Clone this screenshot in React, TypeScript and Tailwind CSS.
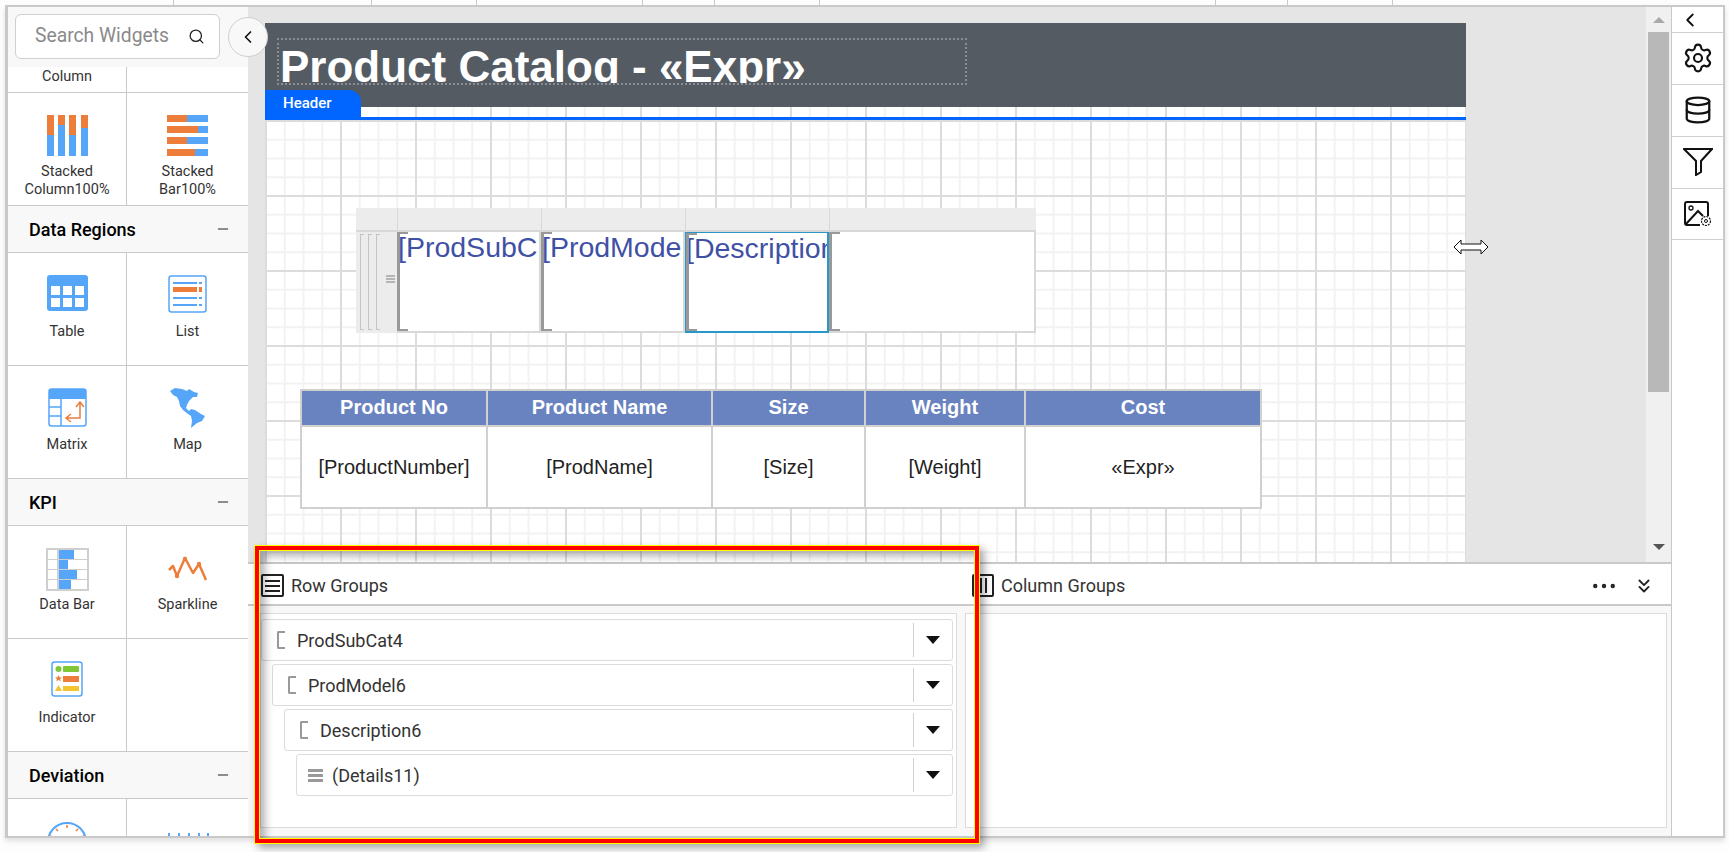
import { ChevronLeft, ChevronsDown, Database, Minus, MoreHorizontal, Search, Settings } from "lucide-react";

const blue = "#55a5f8";
const orange = "#ed7d3b";

function StackedColumnIcon() {
  const cols = [[0, 20], [11, 10], [22, 20], [34, 13]];
  return (
    <svg width="41" height="41" viewBox="0 0 41 41">
      {cols.map(([x, h]) => (
        <g key={x}>
          <rect x={x} y={0} width={7} height={h} fill={orange} />
          <rect x={x} y={h} width={7} height={41 - h} fill={blue} />
        </g>
      ))}
    </svg>
  );
}

function StackedBarIcon() {
  const bars = [[0, 20], [11, 31], [22, 20], [34, 28]];
  return (
    <svg width="41" height="41" viewBox="0 0 41 41">
      {bars.map(([y, w]) => (
        <g key={y}>
          <rect x={0} y={y} width={w} height={7} fill={orange} />
          <rect x={w} y={y} width={41 - w} height={7} fill={blue} />
        </g>
      ))}
    </svg>
  );
}

function TableIcon() {
  return (
    <svg width="41" height="36" viewBox="0 0 41 36">
      <rect width="41" height="36" rx="3" fill={blue} />
      {[4, 16, 28].map((x) => (
        <g key={x} fill="#fff">
          <rect x={x} y={11} width={9} height={9} />
          <rect x={x} y={23} width={9} height={9} />
        </g>
      ))}
    </svg>
  );
}

function ListIcon() {
  return (
    <svg width="39" height="38" viewBox="0 0 39 38">
      <rect x="1" y="1" width="37" height="36" rx="2.5" fill="#fff" stroke={blue} strokeWidth="1.5" />
      {[7, 29].map((y) => (
        <g key={y} fill={blue}>
          <rect x={5} y={y} width={24} height={2} />
          <rect x={31} y={y} width={3} height={2} />
        </g>
      ))}
      <rect x="5" y="22" width="24" height="2" fill={blue} />
      <rect x="31" y="22" width="3" height="2" fill={blue} />
      <rect x="5" y="12" width="24" height="5" fill={orange} />
      <rect x="31" y="12" width="3" height="5" fill={orange} />
    </svg>
  );
}

function MatrixIcon() {
  return (
    <svg width="39" height="39" viewBox="0 0 39 39" fill="none">
      <rect x="1" y="1" width="37" height="37" rx="2.5" fill="#fff" stroke={blue} strokeWidth="1.5" />
      <path d="M1 3.5a2.5 2.5 0 0 1 2.5-2.5h32a2.5 2.5 0 0 1 2.5 2.5V11H1z" fill={blue} />
      <path d="M1 19h12M1 28h12M13 11v27" stroke={blue} strokeWidth="1.5" />
      <path d="M32 15v15H19M28 19l4-5 4 5M23 26l-5 4 5 4" stroke={orange} strokeWidth="1.5" />
    </svg>
  );
}

function MapIcon() {
  return (
    <svg width="35" height="40" viewBox="0 0 35 40">
      <path
        fill={blue}
        d="M0 3 L5 0 L12 1 L17 3 L19 1 L24 4 L28 5 L27 9 L23 9 L19 13 L17 17 L16 20 L19 23 L21 21 L25 22 L31 26 L35 28 L32 33 L27 35 L21 40 L22 33 L21 28 L18 26 L13 22 L10 18 L9 13 L7 9 L3 7 Z"
      />
    </svg>
  );
}

function DataBarIcon() {
  const bars = [15, 9, 18, 12];
  return (
    <div className="grid h-[43px] w-[43px] grid-rows-4 gap-[1px] border-2 border-[#cfcfcf] bg-[#cfcfcf]">
      {bars.map((w, i) => (
        <div key={i} className="grid grid-cols-[9px_1fr] gap-[2px]">
          <div className="bg-white" />
          <div className="bg-white">
            {/* bar width comes from the data */}
            <div className="h-full bg-[#55a5f8]" style={{ width: w }} />
          </div>
        </div>
      ))}
    </div>
  );
}

function SparklineIcon() {
  return (
    <svg className="mt-[8px]" width="40" height="26" viewBox="0 0 40 26" fill="none">
      <polyline points="1,14 5,10 9,20 17,2 25,17 31,8 38,24" stroke={orange} strokeWidth="2.5" strokeLinejoin="round" />
      <circle cx="9" cy="20" r="2.2" fill={orange} />
      <circle cx="17" cy="3" r="2.2" fill={orange} />
      <circle cx="31" cy="8" r="2.2" fill={orange} />
    </svg>
  );
}

function IndicatorIcon() {
  return (
    <svg width="32" height="36" viewBox="0 0 32 36">
      <rect x="1" y="1" width="30" height="34" rx="2.5" fill="#fff" stroke={blue} strokeWidth="1.5" />
      <circle cx="7.5" cy="8" r="3" fill="#7fc737" />
      <rect x="12" y="5" width="16" height="6" rx="1" fill="#7fc737" />
      <path d="M7.5 14l1 2.2 2.4.2-1.8 1.6.6 2.3-2.2-1.2-2.2 1.2.6-2.3-1.8-1.6 2.4-.2z" fill={orange} />
      <rect x="12" y="15" width="16" height="6" fill={orange} />
      <path d="M7.5 24l3.5 6H4z" fill="#f4c430" />
      <rect x="12" y="25" width="16" height="5" fill="#f4c430" />
    </svg>
  );
}

function GaugeIcon() {
  return (
    <svg width="42" height="17" viewBox="0 0 42 17" fill="none">
      <circle cx="21" cy="21" r="19" stroke={blue} strokeWidth="2" />
      <path d="M21 4v3M10 8l2 2M32 8l-2 2M4 15l3 1M38 15l-3 1" stroke={orange} strokeWidth="1.5" />
    </svg>
  );
}

function BulletIcon() {
  return (
    <svg width="42" height="17" viewBox="0 0 42 17">
      {[1, 11, 21, 31, 40].map((x) => (
        <rect key={x} x={x} y={12} width={2} height={3} fill={blue} />
      ))}
    </svg>
  );
}

function WidgetCell({ label, icon, right }: { label?: string[]; icon?: React.ReactNode; right?: boolean }) {
  return (
    <div className={`flex h-[112px] flex-col items-center ${right ? "" : "border-r border-[#c9c9c9]"}`}>
      <div className="flex h-[70px] items-start pt-[22px]">{icon}</div>
      {label?.map((l) => (
        <div key={l} className="text-[14.5px] leading-[18px] text-[#333]">
          {l}
        </div>
      ))}
    </div>
  );
}

function WidgetRow({ children }: { children: React.ReactNode }) {
  return <div className="grid shrink-0 grid-cols-[119px_121px] border-b border-[#c9c9c9]">{children}</div>;
}

function SectionHead({ title }: { title: string }) {
  return (
    <div className="flex h-[47px] shrink-0 items-center justify-between border-b border-[#c9c9c9] bg-[#f8f8f8] pl-[21px] pr-[17px]">
      <span className="text-[18px] font-medium text-black">{title}</span>
      <Minus size={16} strokeWidth={1.6} className="text-[#222]" />
    </div>
  );
}

function Sidebar() {
  return (
    <aside className="relative z-10 flex w-[240px] shrink-0 flex-col overflow-hidden bg-white">
      <div className="h-[60px] shrink-0 bg-[#f8f8f8] pl-[7px] pt-[7px]">
        <div className="flex h-[45px] w-[205px] items-center justify-between rounded-[6px] border border-[#cfcfcf] bg-white pl-[19px] pr-[14px]">
          <span className="text-[19.3px] text-[#8a8a8a]">Search Widgets</span>
          <Search size={17} strokeWidth={1.8} className="text-[#222]" />
        </div>
      </div>
      <div className="grid h-[26px] shrink-0 grid-cols-[119px_121px] border-b border-[#c9c9c9]">
        <div className="border-r border-[#c9c9c9] text-center text-[14.5px] leading-[20px] text-[#333]">Column</div>
        <div />
      </div>
      <WidgetRow>
        <WidgetCell icon={<StackedColumnIcon />} label={["Stacked", "Column100%"]} />
        <WidgetCell right icon={<StackedBarIcon />} label={["Stacked", "Bar100%"]} />
      </WidgetRow>
      <SectionHead title="Data Regions" />
      <WidgetRow>
        <WidgetCell icon={<TableIcon />} label={["Table"]} />
        <WidgetCell right icon={<ListIcon />} label={["List"]} />
      </WidgetRow>
      <WidgetRow>
        <WidgetCell icon={<MatrixIcon />} label={["Matrix"]} />
        <WidgetCell right icon={<MapIcon />} label={["Map"]} />
      </WidgetRow>
      <SectionHead title="KPI" />
      <WidgetRow>
        <WidgetCell icon={<DataBarIcon />} label={["Data Bar"]} />
        <WidgetCell right icon={<SparklineIcon />} label={["Sparkline"]} />
      </WidgetRow>
      <WidgetRow>
        <WidgetCell icon={<IndicatorIcon />} label={["Indicator"]} />
        <WidgetCell right />
      </WidgetRow>
      <SectionHead title="Deviation" />
      <div className="grid shrink-0 grid-cols-[119px_121px]">
        <WidgetCell icon={<GaugeIcon />} />
        <WidgetCell right icon={<BulletIcon />} />
      </div>
    </aside>
  );
}

function Bracket({ color = "border-[#999]" }: { color?: string }) {
  return <div className={`absolute inset-y-0 left-0 w-[11px] border-y-2 border-l-[3px] ${color}`} />;
}

function DesignTable() {
  const cols = ["[ProdSubC", "[ProdMode", "[Description", ""];
  return (
    <div className="absolute left-[91px] top-[101px] grid w-[680px] grid-cols-[41px_144px_144px_144px_207px] grid-rows-[24px_101px]">
      <div className="border-b-2 border-[#d8d8d8] bg-[#ececec]" />
      {cols.map((_, i) => (
        <div key={i} className="border-b-2 border-l border-[#d8d8d8] bg-[#ececec]" />
      ))}
      <div className="flex gap-[4px] bg-[#ececec] pl-[4px] pt-[2px]">
        {[0, 1, 2].map((i) => (
          <div key={i} className="h-[96px] w-[4px] border-y border-l border-[#c4c4c4]" />
        ))}
        <div className="ml-[2px] mt-[41px] flex h-[10px] w-[9px] flex-col gap-[1px]">
          <div className="h-[2px] bg-[#b5b5b5]" />
          <div className="h-[2px] bg-[#b5b5b5]" />
          <div className="h-[2px] bg-[#b5b5b5]" />
        </div>
      </div>
      {cols.map((c, i) => (
        <div
          key={i}
          className={`relative overflow-hidden whitespace-nowrap border-b-2 border-r-2 bg-white font-['Liberation_Sans',sans-serif] text-[28.5px] leading-[30px] text-[#3f51a5] ${
            i === 2 ? "border-l border-t border-[#2a97c9]" : "pl-[1px] border-[#d8d8d8]"
          }`}
        >
          <Bracket />
          {c}
        </div>
      ))}
    </div>
  );
}

function DataTable() {
  const rows = [
    ["Product No", "[ProductNumber]"],
    ["Product Name", "[ProdName]"],
    ["Size", "[Size]"],
    ["Weight", "[Weight]"],
    ["Cost", "«Expr»"],
  ];
  return (
    <div className="absolute left-[35px] top-[282px] grid w-[962px] grid-cols-[186px_225px_153px_160px_236px] grid-rows-[36px_82px] border-r-2 border-t-2 border-[#d0d0d0] font-['Liberation_Sans',sans-serif] text-[20px]">
      {rows.map(([h]) => (
        <div key={h} className="flex justify-center border-b-2 border-l-2 border-[#d0d0d0] bg-[#6883c0] pt-[1px] font-bold leading-[30px] text-white">
          {h}
        </div>
      ))}
      {rows.map(([h, v]) => (
        <div key={h} className="flex items-center justify-center border-b-2 border-l-2 border-[#d0d0d0] bg-white text-[#222]">
          {v}
        </div>
      ))}
    </div>
  );
}

function Canvas() {
  return (
    <div className="relative flex min-w-0 flex-1 bg-[#e5e5e5] pl-[17px] pt-[16px]">
      <div className="flex w-[1201px] flex-col">
        <div className="h-[84px] shrink-0 bg-[#555b63] pl-[12px] pt-[15px]">
          <div className="h-[47px] w-[690px] overflow-hidden border-2 border-dotted border-[#8a8e94] pl-[1px] font-['Liberation_Sans',sans-serif] text-[44px] font-bold leading-[54px] text-white">
            Product Catalog - «Expr»
          </div>
        </div>
        <div className="relative flex-1 bg-white bg-[linear-gradient(to_right,#dcdcdc_2px,transparent_2px),linear-gradient(to_bottom,#dcdcdc_2px,transparent_2px),linear-gradient(to_right,#f2f2f2_2px,transparent_2px),linear-gradient(to_bottom,#f2f2f2_2px,transparent_2px)] bg-[size:75px_75px,75px_75px,18.75px_18.75px,18.75px_18.75px] bg-[position:0_13px]">
          <div className="absolute inset-x-0 top-[10px] h-[3px] bg-[#0066ff]" />
          <div className="absolute left-0 top-[-17px] flex h-[30px] w-[96px] rounded-tr-[12px] bg-[#0066ff] pl-[18px] pt-[2px] text-[15px] font-medium leading-[22px] text-white">
            Header
          </div>
          <DesignTable />
          <DataTable />
        </div>
      </div>
      {/* resize cursor sitting on the page edge */}
      <svg className="absolute left-[1205px] top-[232px]" width="36" height="16" viewBox="0 0 36 16">
        <path d="M1 8l7-7v4h20V1l7 7-7 7v-4H8v4z" fill="#fff" stroke="#111" strokeWidth="1" />
      </svg>
    </div>
  );
}

function Scrollbar() {
  return (
    <div className="flex w-[25px] shrink-0 flex-col items-center bg-[#f0f0f0]">
      <div className="flex h-[25px] items-center">
        <div className="h-0 w-0 border-x-[6px] border-b-[6px] border-x-transparent border-b-[#a9a9a9]" />
      </div>
      <div className="h-[360px] w-[21px] bg-[#b8b8b8]" />
      <div className="flex flex-1 items-end pb-[12px]">
        <div className="h-0 w-0 border-x-[6px] border-t-[6px] border-x-transparent border-t-[#555]" />
      </div>
    </div>
  );
}

function Caret() {
  return (
    <svg width="14" height="8" viewBox="0 0 14 8">
      <path d="M0 0h14L7 8z" fill="#111" />
    </svg>
  );
}

function GroupRow({ label, indent, details }: { label: string; indent: string; details?: boolean }) {
  return (
    <div className={`flex h-[42px] items-center rounded-[3px] border border-[#dcdcdc] bg-white ${indent}`}>
      {details ? (
        <div className="ml-[11px] flex w-[15px] flex-col gap-[2px]">
          <div className="h-[3px] bg-[#999]" />
          <div className="h-[3px] bg-[#999]" />
          <div className="h-[3px] bg-[#999]" />
        </div>
      ) : (
        <div className="ml-[15px] h-[18px] w-[8px] rounded-l-[2px] border-y-2 border-l-2 border-[#999]" />
      )}
      <span className={`text-[18px] text-[#333] ${details ? "ml-[9px]" : "ml-[12px]"}`}>{label}</span>
      <div className="ml-auto flex h-[34px] w-[39px] items-center justify-center border-l border-[#d0d0d0]">
        <Caret />
      </div>
    </div>
  );
}

function GroupingPanel() {
  return (
    <div className="flex h-[274px] flex-col border-t-2 border-[#c9c9c9] bg-white">
      <div className="grid h-[42px] shrink-0 grid-cols-[724px_1fr] border-b-2 border-[#c9c9c9] pt-[3px]">
        <div className="flex items-center gap-[7px] pl-[13px]">
          <div className="flex h-[23px] w-[23px] flex-col justify-center gap-[3px] rounded-[2px] border-2 border-[#222] px-[2px]">
            <div className="h-[2px] bg-[#222]" />
            <div className="h-[2px] bg-[#222]" />
            <div className="h-[2px] bg-[#222]" />
          </div>
          <span className="text-[18px] text-[#333]">Row Groups</span>
        </div>
        <div className="flex items-center gap-[7px]">
          <div className="flex h-[23px] w-[22px] justify-center gap-[3px] rounded-[2px] border-2 border-[#222] py-[2px]">
            <div className="w-[2px] bg-[#222]" />
            <div className="w-[2px] bg-[#222]" />
          </div>
          <span className="text-[18px] text-[#333]">Column Groups</span>
          <MoreHorizontal size={30} strokeWidth={1.5} className="ml-auto text-[#222]" />
          <ChevronsDown size={22} strokeWidth={2} className="ml-[7px] mr-[16px] text-[#222]" />
        </div>
      </div>
      <div className="grid flex-1 grid-cols-[697px_1fr] gap-[8px] bg-[#f8f8f8] pb-[8px] pl-[12px] pr-[4px] pt-[7px]">
        <div className="flex flex-col gap-[3px] border border-[#dcdcdc] bg-white pr-[3px] pt-[5px]">
          <GroupRow label="ProdSubCat4" indent="ml-0" />
          <GroupRow label="ProdModel6" indent="ml-[11px]" />
          <GroupRow label="Description6" indent="ml-[23px]" />
          <GroupRow label="(Details11)" indent="ml-[35px]" details />
        </div>
        <div className="border border-[#dcdcdc] bg-white" />
      </div>
    </div>
  );
}

function RightBar() {
  const item = "flex h-[52px] items-center justify-center border-t border-[#cfcfcf] pb-[1px] text-[#111]";
  return (
    <div className="flex w-[52px] shrink-0 flex-col border-l border-[#c9c9c9] bg-white">
      <div className="flex h-[25px] items-center pl-[7px]">
        <ChevronLeft size={22} strokeWidth={2} className="text-[#111]" />
      </div>
      <div className={item}>
        <Settings size={32} strokeWidth={1.6} />
      </div>
      <div className={item}>
        <Database size={30} strokeWidth={1.8} />
      </div>
      <div className={item}>
        <svg width="30" height="28" viewBox="0 0 30 28" fill="none" stroke="#111" strokeWidth="2">
          <path d="M1 1h28L18 13v11l-5 3V13z" />
        </svg>
      </div>
      <div className={`${item} border-b`}>
        <svg width="28" height="26" viewBox="0 0 28 26" fill="none" stroke="#111" strokeWidth="2">
          <path d="M24 15V3a2 2 0 0 0-2-2H3a2 2 0 0 0-2 2v19a2 2 0 0 0 2 2h13" />
          <circle cx="7" cy="7" r="2" strokeWidth="1.3" />
          <path d="M2 23l12-13 5 5" />
          <circle cx="22" cy="20" r="4.5" strokeWidth="1.2" strokeDasharray="2 1" />
          <circle cx="22" cy="20" r="1.5" strokeWidth="1" />
        </svg>
      </div>
    </div>
  );
}

export default function App() {
  // ticks on the ruler strip above the designer
  const ticks = [174, 198, 105, 166, 72, 105, 396, 72, 105];
  return (
    <div className="relative h-[852px] w-[1729px] overflow-hidden bg-[#fdfdfd] font-['Roboto',sans-serif]">
      <div className="flex h-[5px]">
        {ticks.map((w, i) => (
          <div key={i} className="border-r border-[#c9c9c9]" style={{ width: w }} />
        ))}
      </div>
      <div className="ml-[5px] flex h-[833px] w-[1720px] border-b-2 border-l-[3px] border-r-2 border-t-2 border-[#c9c9c9] shadow-[0_3px_5px_rgba(0,0,0,0.12)]">
        <Sidebar />
        <div className="flex min-w-0 flex-1 flex-col">
          <div className="flex min-h-0 flex-1">
            <Canvas />
            <Scrollbar />
          </div>
          <GroupingPanel />
        </div>
        <RightBar />
      </div>
      {/* collapse toggle sits over the sidebar edge */}
      <div className="absolute left-[228px] top-[17px] z-20 flex h-[40px] w-[40px] items-center justify-center rounded-full border border-[#cfcfcf] bg-[#f8f8f8]">
        <ChevronLeft size={20} strokeWidth={2} className="text-[#111]" />
      </div>
      {/* highlight rectangle painted over the screenshot */}
      <div className="absolute left-[254px] top-[545px] z-30 h-[299px] w-[726px] border border-[#ffff00] shadow-[4px_4px_8px_rgba(0,0,0,0.35)]">
        <div className="h-full w-full border-[4px] border-[#ff0000]">
          <div className="h-full w-full border border-[#ffff00] shadow-[inset_7px_7px_8px_-2px_rgba(0,0,0,0.3)]" />
        </div>
      </div>
    </div>
  );
}
